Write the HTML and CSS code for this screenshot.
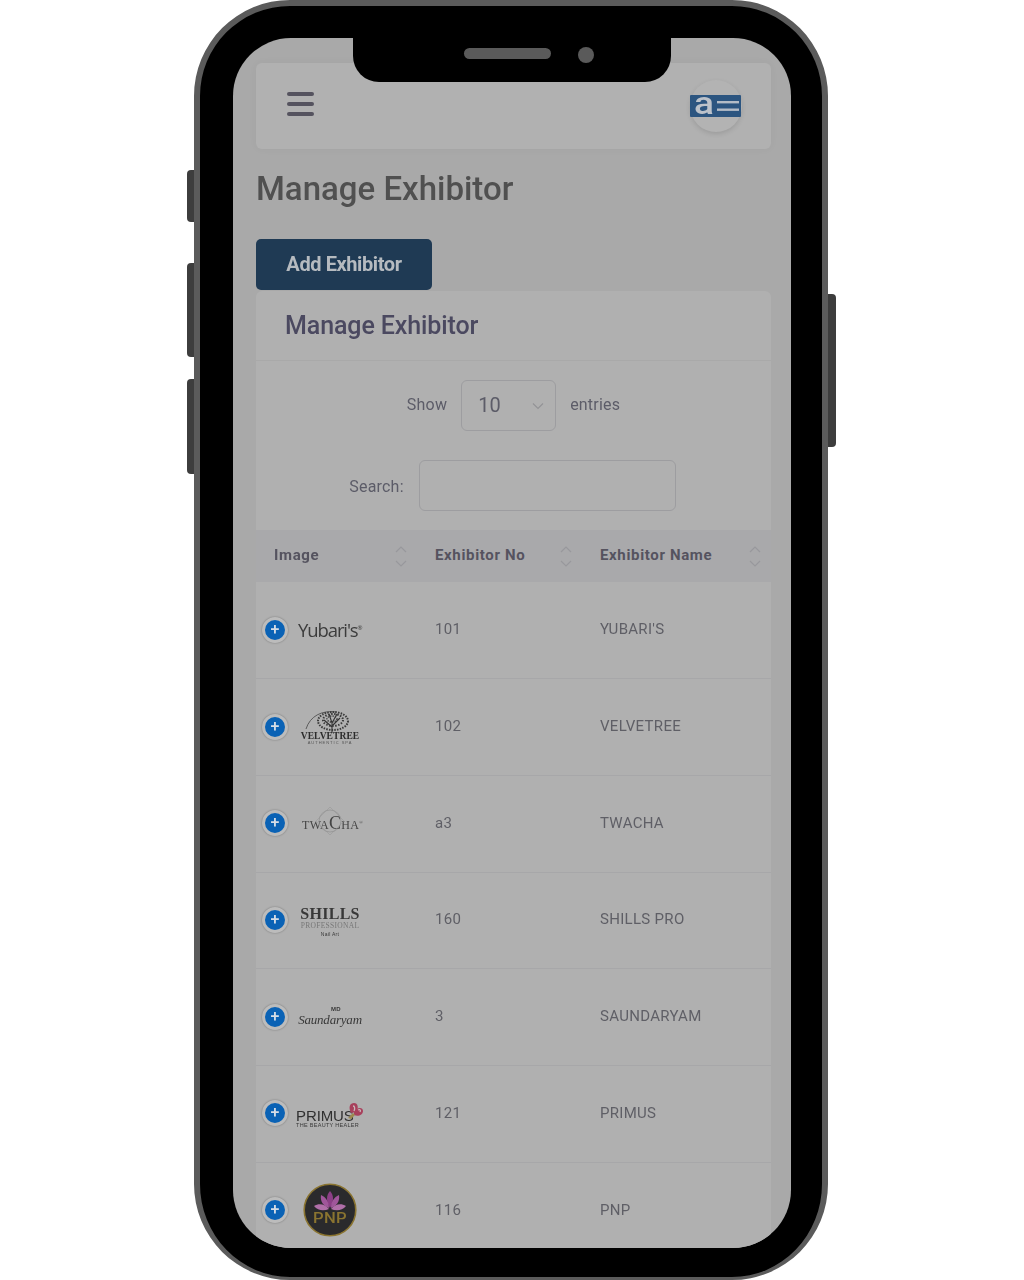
FILE: index.html
```html
<!DOCTYPE html>
<html lang="en">
<head>
  <meta charset="utf-8">
  <title>Manage Exhibitor</title>
  <link rel="stylesheet" href="styles.css">
</head>
<body>
  <div class="phone">
    <span class="side-btn side-mute"></span>
    <span class="side-btn side-up"></span>
    <span class="side-btn side-down"></span>
    <span class="side-btn side-power"></span>
    <div class="notch">
      <span class="speaker"></span>
      <span class="camera"></span>
    </div>
    <div class="screen">
      <div class="screen-inner">
        <div class="navbar">
          <div class="burger"><span></span><span></span><span></span></div>
          <div class="avatar">
            <svg class="ae-logo" width="52" height="24" viewBox="0 0 52 24">
              <rect x="0" y="1" width="51" height="22" rx="1" fill="#2c5580"/>
              <text x="4" y="20" textLength="20" lengthAdjust="spacingAndGlyphs" class="ae-a">a</text>
              <rect x="27" y="7" width="22" height="2.4" fill="#b4bcc6"/>
              <rect x="27" y="14.5" width="22" height="2.4" fill="#b4bcc6"/>
            </svg>
          </div>
        </div>

        <h1 class="page-title">Manage Exhibitor</h1>
        <a class="btn-add">Add Exhibitor</a>

        <div class="card">
          <div class="card-head">Manage Exhibitor</div>
          <div class="filter-row show-row">
            <span>Show</span>
            <div class="select-box">
              <span>10</span>
              <svg width="12" height="8" viewBox="0 0 12 8"><path d="M1 1.5l5 5 5-5" fill="none" stroke="#939396" stroke-width="1.2"/></svg>
            </div>
            <span>entries</span>
          </div>
          <div class="filter-row search-row">
            <span>Search:</span>
            <div class="search-box"></div>
          </div>

          <table class="ex-table">
            <colgroup>
              <col class="col-image">
              <col class="col-no">
              <col class="col-name">
            </colgroup>
            <tr class="head-row">
              <th>Image
                <svg class="sort" width="12" height="21" viewBox="0 0 12 21"><path d="M1 6l5-5 5 5M1 15l5 5 5-5" fill="none" stroke="#98989c" stroke-width="1.2"/></svg>
              </th>
              <th>Exhibitor No
                <svg class="sort" width="12" height="21" viewBox="0 0 12 21"><path d="M1 6l5-5 5 5M1 15l5 5 5-5" fill="none" stroke="#98989c" stroke-width="1.2"/></svg>
              </th>
              <th>Exhibitor Name
                <svg class="sort" width="12" height="21" viewBox="0 0 12 21"><path d="M1 6l5-5 5 5M1 15l5 5 5-5" fill="none" stroke="#98989c" stroke-width="1.2"/></svg>
              </th>
            </tr>
            <tr>
              <td><div class="img-cell"><span class="plus">+</span><div class="logo logo-yubari">Yubari's<sup>®</sup></div></div></td>
              <td>101</td>
              <td>YUBARI'S</td>
            </tr>
            <tr>
              <td><div class="img-cell"><span class="plus">+</span>
                <div class="logo">
                  <svg width="62" height="38" viewBox="0 0 62 38">
                    <path d="M7 21C11 8 23 2 37 4" fill="none" stroke="#444" stroke-width=".8"/>
                    <path d="M33 25V14M33 19l-8-7M33 18l8-8M33 15l-3-9M33 15l5-9" stroke="#333" stroke-width="1.1" fill="none"/>
                    <ellipse cx="34" cy="13" rx="15" ry="9" fill="none" stroke="#3a3a3a" stroke-width="2" stroke-dasharray="1.5 1.2"/>
                    <ellipse cx="34" cy="12" rx="10" ry="6" fill="none" stroke="#3a3a3a" stroke-width="2" stroke-dasharray="1.5 1.5"/>
                    <ellipse cx="33" cy="11" rx="5" ry="3" fill="none" stroke="#3a3a3a" stroke-width="1.5" stroke-dasharray="1.2 1.2"/>
                    <text x="31" y="31" class="logo-velvet">VELVETREE</text>
                    <text x="31" y="36" class="logo-velvet-sub">AUTHENTIC SPA</text>
                  </svg>
                </div></div></td>
              <td>102</td>
              <td>VELVETREE</td>
            </tr>
            <tr>
              <td><div class="img-cell"><span class="plus">+</span>
                <div class="logo logo-twacha">
                  <svg class="twacha-orn" width="30" height="30" viewBox="0 0 30 30">
                    <circle cx="15" cy="15" r="11" fill="none" stroke="#8c8c8c" stroke-width=".6"/>
                    <path d="M15 1l14 14-14 14L1 15z" fill="none" stroke="#949494" stroke-width=".5"/>
                  </svg>
                  TWA<b>C</b>HA<sup>®</sup>
                </div></div></td>
              <td>a3</td>
              <td>TWACHA</td>
            </tr>
            <tr>
              <td><div class="img-cell"><span class="plus">+</span>
                <div class="logo logo-shills">
                  <div class="shills-main">SHILLS</div>
                  <div class="shills-sub">PROFESSIONAL</div>
                  <div class="shills-tiny">Nail Art</div>
                </div></div></td>
              <td>160</td>
              <td>SHILLS PRO</td>
            </tr>
            <tr>
              <td><div class="img-cell"><span class="plus">+</span>
                <div class="logo logo-saund">
                  <div class="saund-top">MD</div>
                  <div class="saund-main">Saundaryam</div>
                </div></div></td>
              <td>3</td>
              <td>SAUNDARYAM</td>
            </tr>
            <tr>
              <td><div class="img-cell"><span class="plus">+</span>
                <div class="logo logo-primus">
                  <svg class="butterfly" width="18" height="19" viewBox="0 0 18 19">
                    <path d="M5 11C2 5 4 1 8 1c4 0 5 5 2 9z" fill="#a8405c"/>
                    <path d="M8 10c3-5 9-5 9-1s-5 6-9 4z" fill="#a8405c"/>
                    <path d="M7 4c2 0 2 3 1 5M12 8c2-1 3 0 2 2" fill="none" stroke="#c9b9bd" stroke-width="1.3"/>
                    <path d="M2 16l5-5 2 2-4 4z" fill="#9c8a50"/>
                  </svg>
                  <div class="primus-main">PRIMUS</div>
                  <div class="primus-sub">THE BEAUTY HEALER</div>
                </div></div></td>
              <td>121</td>
              <td>PRIMUS</td>
            </tr>
            <tr>
              <td><div class="img-cell"><span class="plus">+</span>
                <div class="logo">
                  <svg width="54" height="54" viewBox="0 0 54 54">
                    <circle cx="27" cy="27" r="25.8" fill="#2a2a2c" stroke="#8a7430" stroke-width="1.6"/>
                    <path d="M27 8c4 4 4 11 0 17c-4-6-4-13 0-17z" fill="#8c3f86"/>
                    <path d="M18 12c5 2 8 7 8 13c-6-2-9-7-8-13zM36 12c-5 2-8 7-8 13c6-2 9-7 8-13z" fill="#a0569a"/>
                    <path d="M11 23c5-3 11-2 15 3c-5 2-11 2-15-3zM43 23c-5-3-11-2-15 3c5 2 11 2 15-3z" fill="#b06fa8"/>
                    <text x="27" y="40" textLength="34" lengthAdjust="spacingAndGlyphs" class="logo-pnp">PNP</text>
                  </svg>
                </div></div></td>
              <td>116</td>
              <td>PNP</td>
            </tr>
          </table>
        </div>
      </div>
    </div>
  </div>
</body>
</html>
```

FILE: styles.css
```css
html, body {
  margin: 0;
  height: 1280px;
  overflow: hidden;
  background: #fff;
  font-family: Roboto, "Liberation Sans", sans-serif;
}

/* phone frame */
.phone {
  position: relative;
  box-sizing: border-box;
  width: 634px;
  height: 1280px;
  margin-left: 194px;
  padding: 32px 31px 26px 33px;
  background: #000;
  border: 6px solid #5b5b5b;
  border-bottom-width: 3px;
  border-radius: 96px;
}
.side-btn {
  position: absolute;
  width: 7px;
  background: #3d3d3d;
  border-radius: 4px 0 0 4px;
  left: -13px;
}
.side-mute { top: 164px; height: 52px; }
.side-up { top: 257px; height: 94px; }
.side-down { top: 373px; height: 95px; }
.side-power {
  left: auto;
  right: -14px;
  top: 288px;
  width: 8px;
  height: 153px;
  border-radius: 0 4px 4px 0;
}
.notch {
  position: absolute;
  top: 32px;
  left: 153px;
  width: 318px;
  height: 44px;
  background: #000;
  border-radius: 0 0 26px 26px;
  z-index: 2;
}
.speaker {
  position: absolute;
  left: 111px;
  top: 10px;
  width: 87px;
  height: 11px;
  border-radius: 6px;
  background: #5a5a5a;
}
.camera {
  position: absolute;
  left: 225px;
  top: 9px;
  width: 16px;
  height: 16px;
  border-radius: 50%;
  background: #5a5a5a;
}
.screen {
  width: 558px;
  height: 1210px;
  background: #a9a9a9;
  border-radius: 58px;
  overflow: hidden;
}
.screen-inner {
  padding: 25px 20px 0 23px;
  filter: blur(.6px);
}

/* top bar */
.navbar {
  display: flex;
  justify-content: space-between;
  align-items: center;
  box-sizing: border-box;
  height: 86px;
  padding: 0 29px 0 31px;
  background: #b1b1b1;
  border-radius: 6px;
  box-shadow: 0 0 8px rgba(0, 0, 0, .04);
}
.burger {
  display: flex;
  flex-direction: column;
  gap: 6px;
  margin-top: -5px;
}
.burger span {
  display: block;
  width: 27px;
  height: 4px;
  border-radius: 2px;
  background: #55535f;
}
.avatar {
  display: flex;
  align-items: center;
  justify-content: center;
  width: 52px;
  height: 52px;
  border-radius: 50%;
  background: #b3b3b3;
  box-shadow: 0 2px 5px rgba(0, 0, 0, .12);
}
.ae-logo {
  overflow: visible;
}
.ae-a {
  font: 500 31px Roboto, sans-serif;
  fill: #bcc2ca;
}
.page-title {
  margin: 21px 0 0;
  font-size: 33px;
  line-height: 38px;
  font-weight: 500;
  color: #505050;
}
.btn-add {
  display: flex;
  align-items: center;
  justify-content: center;
  box-sizing: border-box;
  width: 176px;
  height: 51px;
  margin-top: 31px;
  padding-bottom: 2px;
  border-radius: 5px;
  background: #1f3a54;
  color: #b6bbc0;
  font-size: 20px;
  font-weight: 700;
  letter-spacing: -.4px;
}

/* card with the table */
.card {
  margin-top: 1px;
  background: #b0b0b0;
  border-radius: 6px 6px 0 0;
}
.card-head {
  box-sizing: border-box;
  height: 70px;
  padding: 0 29px;
  line-height: 70px;
  font-size: 25px;
  font-weight: 500;
  letter-spacing: -.1px;
  color: #4b4960;
  border-bottom: 1px solid #a9a9a9;
}
.filter-row {
  display: flex;
  align-items: center;
  justify-content: center;
  font-size: 16px;
  letter-spacing: .2px;
  color: #5c5c68;
}
.show-row {
  gap: 14px;
  padding-top: 19px;
}
.show-row span {
  padding-bottom: 2px;
}
.search-row {
  gap: 15px;
  padding: 29px 2px 19px 0;
}
.search-row span {
  padding-top: 2px;
}
.select-box {
  display: flex;
  align-items: center;
  justify-content: space-between;
  box-sizing: border-box;
  width: 95px;
  height: 51px;
  padding: 0 11px 0 16px;
  border: 1px solid #9d9da0;
  border-radius: 6px;
  font-size: 20px;
}
.search-box {
  box-sizing: border-box;
  width: 257px;
  height: 51px;
  border: 1px solid #9d9da0;
  border-radius: 6px;
}
.ex-table {
  width: 515px;
  table-layout: fixed;
  border-collapse: collapse;
  font-size: 15px;
  color: #5f5f66;
}
.col-image { width: 161px; }
.col-no { width: 165px; }
.col-name { width: 189px; }
.ex-table th {
  position: relative;
  height: 52px;
  padding: 0 18px 3px;
  box-sizing: border-box;
  background: #a9a9ab;
  text-align: left;
  font-weight: 700;
  letter-spacing: .65px;
  color: #55535f;
}
.sort {
  position: absolute;
  right: 10px;
  top: 16px;
}
.ex-table tr {
  height: 96.7px;
}
.ex-table tr.head-row {
  height: 52px;
}
.ex-table td {
  padding: 0 18px 2px;
  border-bottom: 1px solid #a7a7a9;
  letter-spacing: .3px;
}
.ex-table tr:last-child td {
  border-bottom: none;
}
.ex-table td:first-child {
  padding: 0 0 1px 6px;
}

/* image column */
.img-cell {
  display: flex;
  align-items: center;
  gap: 8px;
}
.plus {
  flex: none;
  box-sizing: content-box;
  width: 20px;
  height: 20px;
  border: 3px solid #bcbcbc;
  border-radius: 50%;
  background: #0a62b5;
  box-shadow: 0 0 2px rgba(0, 0, 0, .35);
  color: #d5dde6;
  text-align: center;
  font-size: 16px;
  line-height: 19px;
  font-weight: 500;
}
.logo {
  position: relative;
  display: flex;
  flex-direction: column;
  align-items: center;
  justify-content: center;
  width: 68px;
  color: #383838;
}
.logo-yubari {
  display: block;
  white-space: nowrap;
  padding-left: 2px;
  font-family: "Open Sans", sans-serif;
  font-size: 18.5px;
  font-weight: 500;
  letter-spacing: -1.1px;
  color: #3c3c3c;
}
.logo-yubari sup {
  font-size: 6px;
}
.logo-velvet {
  font: 700 9.5px "Liberation Serif", serif;
  letter-spacing: .1px;
  text-anchor: middle;
  fill: #2c2c2c;
}
.logo-velvet-sub {
  font: 4px "Liberation Sans", sans-serif;
  letter-spacing: 1px;
  text-anchor: middle;
  fill: #555;
}
.logo-twacha {
  display: block;
  white-space: nowrap;
  padding-left: 6px;
  font-family: "Liberation Serif", serif;
  font-size: 12px;
  color: #444;
}
.logo-twacha b {
  font-weight: 400;
  font-size: 18px;
}
.logo-twacha sup {
  font-size: 5px;
}
.twacha-orn {
  position: absolute;
  left: 19px;
  top: -7px;
}
.logo-shills {
  font-family: "Liberation Serif", serif;
  line-height: 1;
}
.shills-main {
  font-size: 16px;
  font-weight: 700;
  padding-top: 3px;
}
.shills-sub {
  font-size: 7.5px;
  color: #777;
}
.shills-tiny {
  margin-top: 1px;
  font: 5px "Liberation Sans", sans-serif;
}
.saund-top {
  padding-left: 12px;
  font: 700 6px "Liberation Sans", sans-serif;
}
.saund-main {
  font: italic 13px "Liberation Serif", serif;
  letter-spacing: -.2px;
  white-space: nowrap;
}
.logo-primus {
  align-items: flex-start;
  padding-top: 10px;
  font-family: "Liberation Sans", sans-serif;
  line-height: 1;
}
.primus-main {
  font-size: 15px;
  font-weight: 500;
  letter-spacing: -.1px;
  color: #303030;
}
.primus-sub {
  font-size: 5.5px;
  white-space: nowrap;
}
.butterfly {
  position: absolute;
  right: 0;
  top: 4px;
}
.logo-pnp {
  font: 500 15px Roboto, sans-serif;
  text-anchor: middle;
  fill: #8a7430;
}
```
